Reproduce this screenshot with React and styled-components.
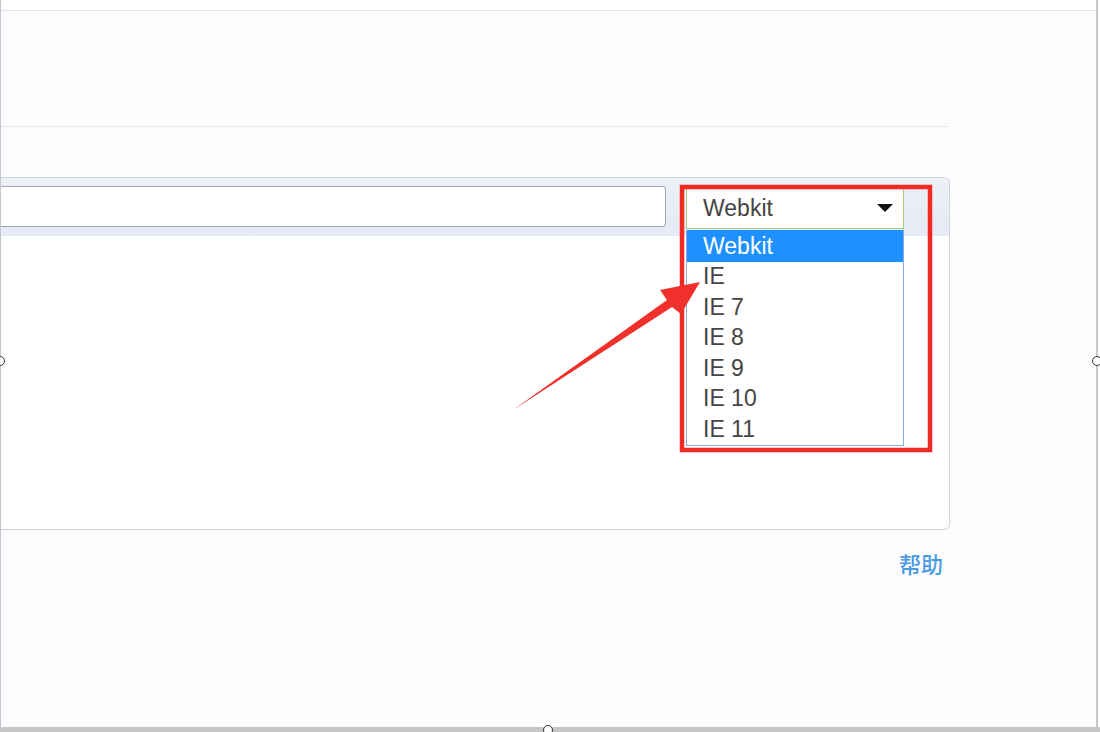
import styled, { createGlobalStyle } from 'styled-components'

const GlobalStyle = createGlobalStyle`
  html, body {
    margin: 0;
    padding: 0;
    background: #ffffff;
  }
  body {
    font-family: "Liberation Sans", Arial, "Noto Sans CJK SC", sans-serif;
  }
`

const options = ['Webkit', 'IE', 'IE 7', 'IE 8', 'IE 9', 'IE 10', 'IE 11']

export default function App() {
  return <Screen>
    <GlobalStyle />
    <Window>
      <TopStrip />
      <HeaderArea />
      <Panel>
        <PanelHeader>
          <UrlInput />
          <SelectWrapper>
            <SelectBox>
              <span>Webkit</span>
              <Caret />
            </SelectBox>
            <OptionList>
              {options.map((o, i) => <Option key={o} active={i === 0} children={o} />)}
            </OptionList>
          </SelectWrapper>
        </PanelHeader>
      </Panel>
      <HelpRow>
        <HelpLink children='帮助' />
      </HelpRow>
    </Window>
    <BottomBar />
    <Handle style={{ left: -5, top: 356 }} />
    <Handle style={{ left: 1092, top: 356 }} />
    <Handle style={{ left: 543, top: 725 }} />
    <Annotation width='1100' height='732' viewBox='0 0 1100 732'>
      <rect x='682' y='187' width='248' height='263' fill='none' stroke='#ef2b24' strokeWidth='4.5' />
      <polygon
        points='513,410 667,300 660,290 700,282 681,314 672,307'
        fill='#f0302a'
      />
    </Annotation>
  </Screen>
}

const Screen = styled.div`
  position: relative;
  width: 1100px;
  height: 732px;
  overflow: hidden;
  display: flex;
  flex-direction: column;
  background: #ffffff;
`
const Window = styled.div`
  box-sizing: border-box;
  width: 1098px;
  height: 727px;
  background: #fcfcfe;
  border-left: 1px solid #c4c6d0;
  border-right: 2px solid #c9c9cd;
  display: flex;
  flex-direction: column;
`
const TopStrip = styled.div`
  height: 10px;
  background: #ffffff;
  border-bottom: 1px solid #e4e4e9;
`
const HeaderArea = styled.div`
  height: 115px;
  width: 947px;
  border-bottom: 1px solid #e6e6ea;
`
const Panel = styled.div`
  box-sizing: border-box;
  margin-top: 50px;
  width: 949px;
  height: 353px;
  background: #ffffff;
  border: 1px solid #d0d3d8;
  border-left: none;
  border-radius: 0 6px 6px 0;
`
const PanelHeader = styled.div`
  height: 58px;
  box-sizing: border-box;
  padding-top: 8px;
  display: flex;
  align-items: flex-start;
  background: linear-gradient(#eceff6, #e5eaf4);
  border-radius: 0 6px 0 0;
`
const UrlInput = styled.div`
  box-sizing: border-box;
  width: 665px;
  height: 41px;
  background: #ffffff;
  border: 1px solid #a3a5ad;
  border-left: none;
  border-radius: 0 4px 4px 0;
`
const SelectWrapper = styled.div`
  position: relative;
  margin-left: 20px;
  margin-top: 1px;
  width: 218px;
`
const SelectBox = styled.div`
  box-sizing: border-box;
  height: 42px;
  padding: 0 10px 0 16px;
  display: flex;
  align-items: center;
  justify-content: space-between;
  background: #ffffff;
  border: 1px solid #a9c97a;
  color: #444444;
  font-size: 23px;
`
const Caret = styled.span`
  width: 0;
  height: 0;
  border-left: 8px solid transparent;
  border-right: 8px solid transparent;
  border-top: 8px solid #111111;
`
const OptionList = styled.div`
  position: absolute;
  top: 43px;
  left: 0;
  box-sizing: border-box;
  width: 218px;
  height: 216px;
  background: #ffffff;
  border: 1px solid #88acdf;
  border-top: none;
`
const Option = styled.div`
  height: ${p => p.active ? '32px' : '30.5px'};
  line-height: ${p => p.active ? '32px' : '29px'};
  padding-left: 16px;
  font-size: 23px;
  color: ${p => p.active ? '#ffffff' : '#444444'};
  background: ${p => p.active ? '#1e90ff' : 'transparent'};
`
const HelpRow = styled.div`
  width: 950px;
  margin-top: 19px;
  display: flex;
  justify-content: flex-end;
`
const HelpLink = styled.span`
  margin-right: 8px;
  font-family: "Noto Sans CJK SC", sans-serif;
  font-size: 22px;
  line-height: 28px;
  font-weight: 500;
  color: #4a9ae6;
`
const BottomBar = styled.div`
  height: 5px;
  background: #c6c6c8;
`
const Handle = styled.div`
  position: absolute;
  box-sizing: border-box;
  width: 10px;
  height: 10px;
  border: 1.5px solid #333333;
  border-radius: 50%;
  background: #ffffff;
`
const Annotation = styled.svg`
  position: absolute;
  left: 0;
  top: 0;
  pointer-events: none;
`
